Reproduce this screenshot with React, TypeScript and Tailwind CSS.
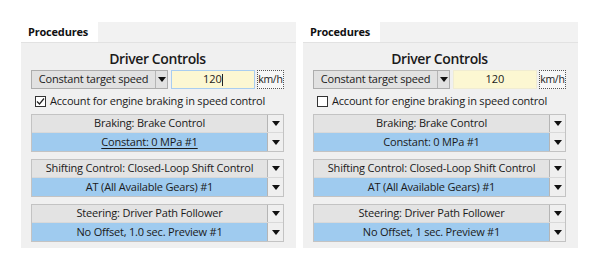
import React from 'react';

const FONT = { fontFamily: '"Open Sans", "Noto Sans", sans-serif' };

function Arrow() {
  return (
    <svg width="8" height="5" viewBox="0 0 8 5">
      <path d="M0 0 L8 0 L4 5 Z" fill="#111" />
    </svg>
  );
}

function ComboRow({ label, blue, underline }: { label: string; blue?: boolean; underline?: boolean }) {
  return (
    <div className={`flex ${blue ? 'h-[18px]' : 'h-[17px]'}`}>
      <div
        className={`flex-1 flex items-center justify-center text-[11px] tracking-[-0.2px] text-[#1a1a1a] border-r border-[#b5b5b5] ${
          blue ? 'bg-[#9fcbef]' : 'bg-[#e3e3e3]'
        } ${underline ? 'underline underline-offset-2' : ''}`}
      >
        {label}
      </div>
      <div className="w-[15px] flex items-center justify-center bg-[#efefef]">
        <Arrow />
      </div>
    </div>
  );
}

function Group({ title, value, underline }: { title: string; value: string; underline?: boolean }) {
  return (
    <div className="flex flex-col gap-px border border-[#c3c3c3] bg-[#d9d9d9]">
      <ComboRow label={title} />
      <ComboRow label={value} blue underline={underline} />
    </div>
  );
}

function Panel({ checked, preview, underline }: { checked: boolean; preview: string; underline?: boolean }) {
  return (
    <div className="w-[275px] flex flex-col" style={FONT}>
      {/* tab strip */}
      <div className="h-[21px] flex bg-[#f2f2f2] border-b border-[#e2e2e2]">
        <div className="w-[77px] bg-white flex items-center pl-[7px] text-[11px] tracking-[-0.2px] font-bold text-[#111]">
          Procedures
        </div>
      </div>

      <div className="h-[205px] bg-[#f0f0f0] pl-[10px] pr-[12px] flex flex-col">
        <div className="h-[27px] flex items-end justify-center pb-[1px] text-[14px] tracking-[-0.4px] font-semibold text-[#1a1a1a]">
          Driver Controls
        </div>

        {/* speed row */}
        <div className="h-[19px] flex items-stretch">
          <div className="w-[141px] flex border border-[#adadad] bg-[#e1e1e1]">
            <div className="flex-1 flex items-center justify-center text-[11px] tracking-[-0.2px] text-[#1a1a1a] border-r border-[#b5b5b5]">
              Constant target speed
            </div>
            <div className="w-[11px] flex items-center justify-center">
              <Arrow />
            </div>
          </div>
          <div
            className={`ml-[3px] w-[86px] flex items-center justify-center bg-[#fcf7d2] text-[11px] text-[#1a1a1a] border ${
              checked ? 'border-[#a9cdf0]' : 'border-[#f0ecd2]'
            }`}
          >
            120{checked && <span className="w-px h-[12px] bg-[#222]" />}
          </div>
          <div className="ml-[2px] w-[28px] flex items-center justify-center border border-dotted border-[#555] bg-[#f7f7f7] text-[10.5px] tracking-[-0.3px] text-[#1a1a1a]">
            km/h
          </div>
        </div>

        {/* checkbox */}
        <div className="h-[24px] flex items-center pl-[4px] gap-[4px] text-[11px] tracking-[-0.2px] text-[#1a1a1a]">
          <div className="w-[11px] h-[11px] border border-[#333] bg-white flex items-center justify-center">
            {checked && (
              <svg width="9" height="9" viewBox="0 0 9 9">
                <path d="M1 4.5 L3.5 7 L8 1.5" stroke="#222" strokeWidth="1.2" fill="none" />
              </svg>
            )}
          </div>
          <span>Account for engine braking in speed control</span>
        </div>

        <div className="mt-[1px] flex flex-col gap-[7px]">
          <Group title="Braking: Brake Control" value="Constant: 0 MPa #1" underline={underline} />
          <Group title="Shifting Control: Closed-Loop Shift Control" value="AT (All Available Gears) #1" />
          <Group title="Steering: Driver Path Follower" value={preview} />
        </div>
      </div>
    </div>
  );
}

export default function App() {
  return (
    <div className="w-[600px] h-[269px] bg-white flex gap-[7px] pl-[21px] pt-[22px]">
      <Panel checked preview="No Offset, 1.0 sec. Preview #1" underline />
      <Panel checked={false} preview="No Offset, 1 sec. Preview #1" />
    </div>
  );
}
